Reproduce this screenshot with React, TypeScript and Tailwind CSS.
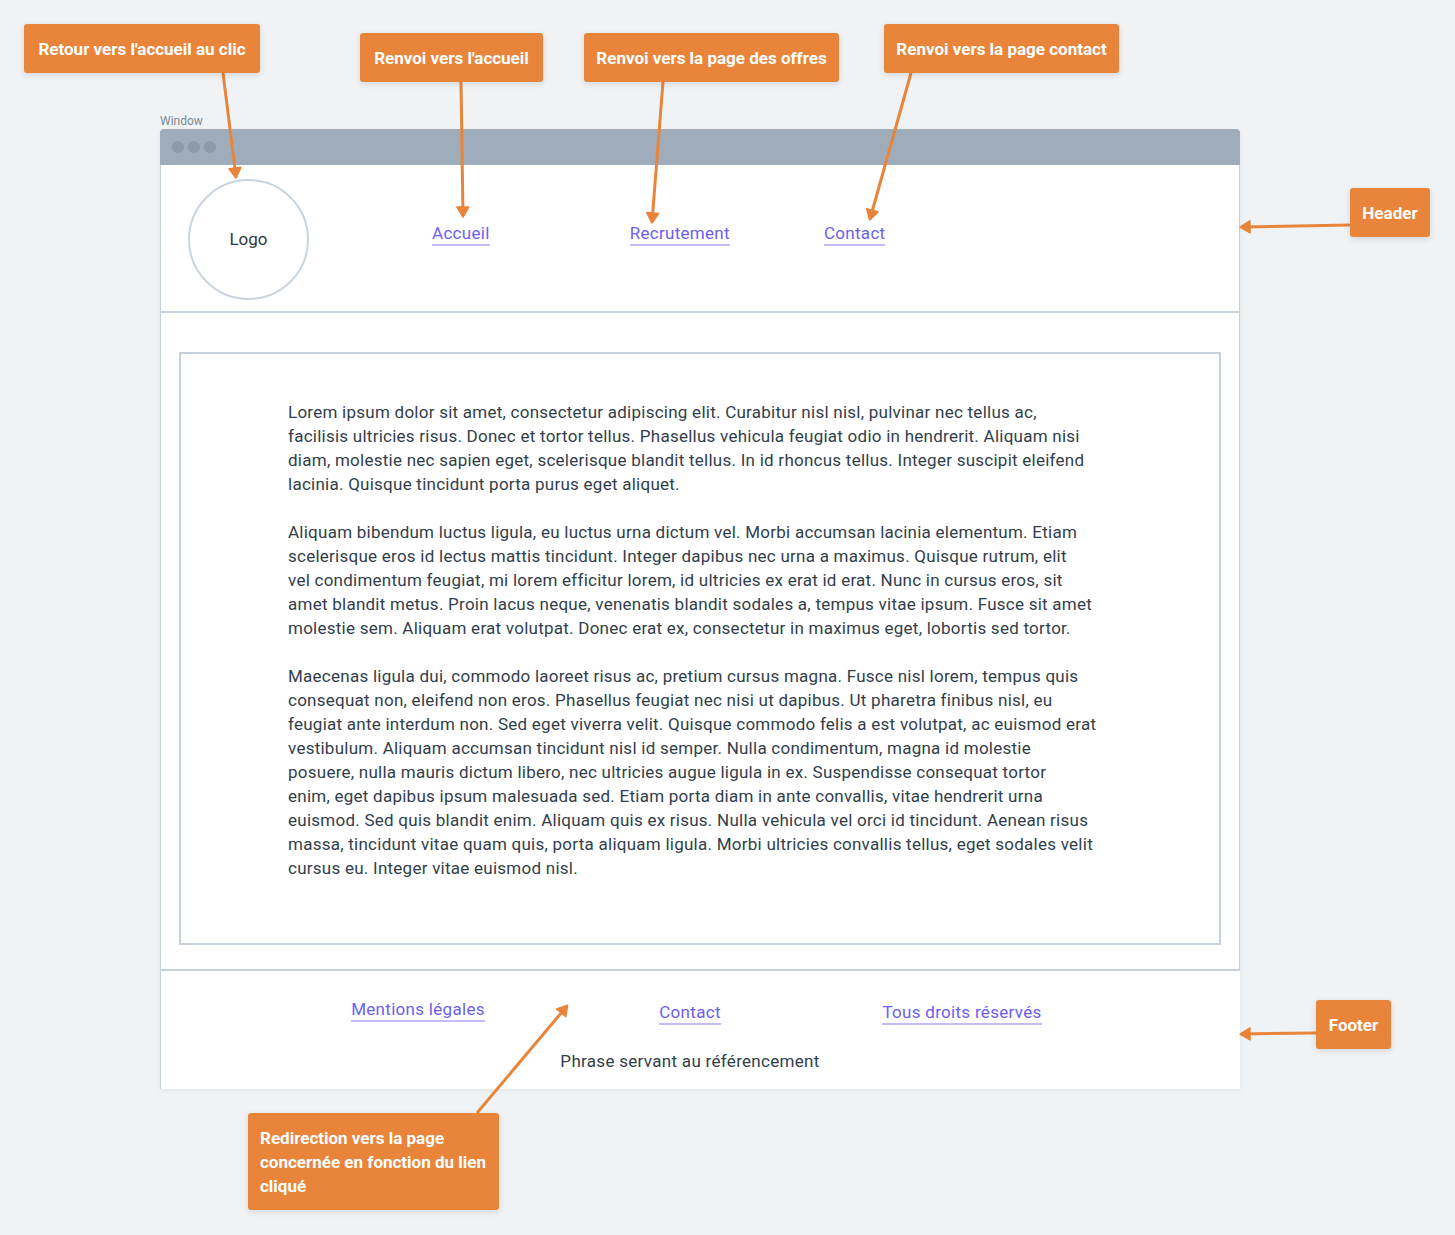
import React from "react";

const font = { fontFamily: "Roboto, 'Noto Sans', sans-serif" };

const paragraphs = [
  [
    "Lorem ipsum dolor sit amet, consectetur adipiscing elit. Curabitur nisl nisl, pulvinar nec tellus ac,",
    "facilisis ultricies risus. Donec et tortor tellus. Phasellus vehicula feugiat odio in hendrerit. Aliquam nisi",
    "diam, molestie nec sapien eget, scelerisque blandit tellus. In id rhoncus tellus. Integer suscipit eleifend",
    "lacinia. Quisque tincidunt porta purus eget aliquet.",
  ],
  [
    "Aliquam bibendum luctus ligula, eu luctus urna dictum vel. Morbi accumsan lacinia elementum. Etiam",
    "scelerisque eros id lectus mattis tincidunt. Integer dapibus nec urna a maximus. Quisque rutrum, elit",
    "vel condimentum feugiat, mi lorem efficitur lorem, id ultricies ex erat id erat. Nunc in cursus eros, sit",
    "amet blandit metus. Proin lacus neque, venenatis blandit sodales a, tempus vitae ipsum. Fusce sit amet",
    "molestie sem. Aliquam erat volutpat. Donec erat ex, consectetur in maximus eget, lobortis sed tortor.",
  ],
  [
    "Maecenas ligula dui, commodo laoreet risus ac, pretium cursus magna. Fusce nisl lorem, tempus quis",
    "consequat non, eleifend non eros. Phasellus feugiat nec nisi ut dapibus. Ut pharetra finibus nisl, eu",
    "feugiat ante interdum non. Sed eget viverra velit. Quisque commodo felis a est volutpat, ac euismod erat",
    "vestibulum. Aliquam accumsan tincidunt nisl id semper. Nulla condimentum, magna id molestie",
    "posuere, nulla mauris dictum libero, nec ultricies augue ligula in ex. Suspendisse consequat tortor",
    "enim, eget dapibus ipsum malesuada sed. Etiam porta diam in ante convallis, vitae hendrerit urna",
    "euismod. Sed quis blandit enim. Aliquam quis ex risus. Nulla vehicula vel orci id tincidunt. Aenean risus",
    "massa, tincidunt vitae quam quis, porta aliquam ligula. Morbi ultricies convallis tellus, eget sodales velit",
    "cursus eu. Integer vitae euismod nisl.",
  ],
];

// arrows of the annotations: [x1, y1, x2, y2]
const arrows = [
  [223, 73, 236, 177],
  [461, 82, 463, 216],
  [663, 82, 652, 222],
  [911, 73, 870, 219],
  [1350, 225, 1241, 227],
  [1316, 1033, 1241, 1034],
  [477, 1113, 567, 1006],
];

function Link({ children }: { children: React.ReactNode }) {
  return (
    <a
      href="#"
      className="inline-block text-[17px] leading-[20px] tracking-[0.3px] text-[#6c5ef2] border-b-2 border-[#c3bcfb] pb-[1px]"
    >
      {children}
    </a>
  );
}

function Note({ className, children }: { className: string; children: React.ReactNode }) {
  return (
    <div
      className={
        "absolute bg-[#e8853a] text-white font-bold text-[17px] leading-[24px] rounded-[3px] shadow-[0_2px_6px_rgba(0,0,0,0.12)] " +
        className
      }
    >
      {children}
    </div>
  );
}

export default function App() {
  return (
    <div className="relative w-[1455px] h-[1235px] bg-[#eff3f6] overflow-hidden" style={font}>
      <div className="pt-[114px] pl-[160px]">
        <div className="text-[12px] leading-[14px] text-[#7d8995] mb-[1px]">Window</div>
        <div className="w-[1080px] shadow-[0_2px_4px_rgba(0,0,0,0.05)]">
          {/* title bar */}
          <div className="h-[36px] bg-[#9eadb9] rounded-t-[4px] flex items-center gap-[4px] pl-[12px]">
            <span className="w-[12px] h-[12px] rounded-full bg-[#8c9ba8]" />
            <span className="w-[12px] h-[12px] rounded-full bg-[#8c9ba8]" />
            <span className="w-[12px] h-[12px] rounded-full bg-[#8c9ba8]" />
          </div>

          {/* header */}
          <div className="h-[148px] bg-white border-x border-b-2 border-[#c6d1db] flex items-start pl-[27px] pt-[14px]">
            <div className="w-[121px] h-[121px] rounded-full border-2 border-[#c9d4de] flex items-center justify-center text-[17px] text-[#2d3843]">
              Logo
            </div>
            <nav className="flex items-start mt-[43px]">
              <div className="ml-[123px]">
                <Link>Accueil</Link>
              </div>
              <div className="ml-[140px]">
                <Link>Recrutement</Link>
              </div>
              <div className="ml-[94px]">
                <Link>Contact</Link>
              </div>
            </nav>
          </div>

          {/* content */}
          <div className="bg-white border-x border-[#c6d1db] pt-[39px] pb-[24px] px-[18px]">
            <div className="border-2 border-[#c6d1db] pl-[107px] pt-[46px] pb-[63px]">
              {paragraphs.map((lines, i) => (
                <p
                  key={i}
                  className={"text-[17px] leading-[24px] tracking-[0.25px] text-[#323e4a] " + (i < 2 ? "mb-[24px]" : "")}
                >
                  {lines.map((l, j) => (
                    <span key={j} className="block whitespace-nowrap">
                      {l}
                    </span>
                  ))}
                </p>
              ))}
            </div>
          </div>

          {/* footer */}
          <div className="h-[120px] bg-white border-l border-t-2 border-[#c6d1db] pl-[121px] pt-[27px]">
            <div className="w-[816px]">
              <div className="grid grid-cols-3 items-start text-center">
                <div>
                  <Link>Mentions légales</Link>
                </div>
                <div className="mt-[3px]">
                  <Link>Contact</Link>
                </div>
                <div className="mt-[3px]">
                  <Link>Tous droits réservés</Link>
                </div>
              </div>
              <p className="mt-[26px] text-center text-[17px] leading-[20px] tracking-[0.3px] text-[#323e4a]">
                Phrase servant au référencement
              </p>
            </div>
          </div>
        </div>
      </div>

      {/* annotations */}
      <svg className="absolute inset-0 pointer-events-none" width="1455" height="1235">
        <defs>
          <marker id="head" markerWidth="14" markerHeight="14" refX="10" refY="7" orient="auto" markerUnits="userSpaceOnUse">
            <path d="M1 1 L11 7 L1 13 Z" fill="#e8853a" stroke="#e8853a" strokeWidth="1.5" strokeLinejoin="round" />
          </marker>
        </defs>
        {arrows.map(([x1, y1, x2, y2], i) => (
          <line key={i} x1={x1} y1={y1} x2={x2} y2={y2} stroke="#e8853a" strokeWidth="3" markerEnd="url(#head)" />
        ))}
      </svg>

      <Note className="left-[24px] top-[24px] w-[236px] h-[49px] flex items-center justify-center">Retour vers l'accueil au clic</Note>
      <Note className="left-[360px] top-[33px] w-[183px] h-[49px] flex items-center justify-center">Renvoi vers l'accueil</Note>
      <Note className="left-[584px] top-[33px] w-[255px] h-[49px] flex items-center justify-center">Renvoi vers la page des offres</Note>
      <Note className="left-[884px] top-[24px] w-[235px] h-[49px] flex items-center justify-center">Renvoi vers la page contact</Note>
      <Note className="left-[1350px] top-[188px] w-[80px] h-[49px] flex items-center justify-center">Header</Note>
      <Note className="left-[1316px] top-[1000px] w-[75px] h-[49px] flex items-center justify-center">Footer</Note>
      <Note className="left-[248px] top-[1113px] w-[251px] h-[97px] px-[12px] pt-[13px]">
        Redirection vers la page
        <br />
        concernée en fonction du lien
        <br />
        cliqué
      </Note>
    </div>
  );
}
